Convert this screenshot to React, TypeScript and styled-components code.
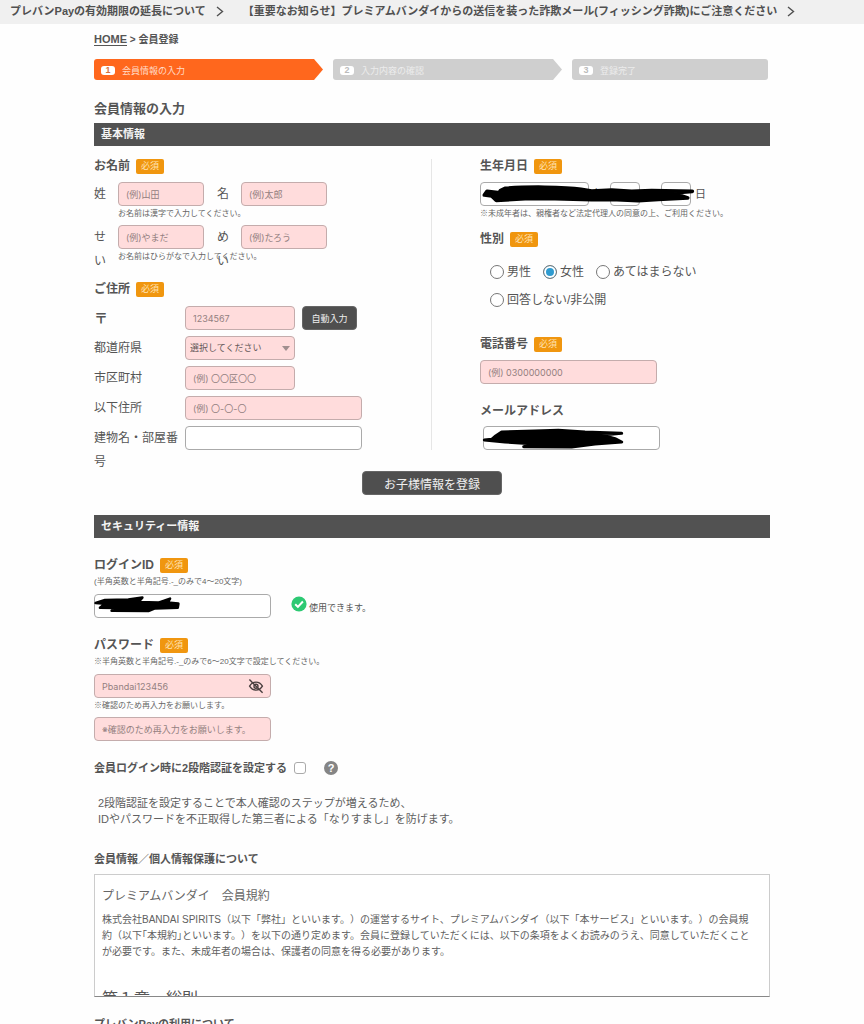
import React from "react";
import styled, { createGlobalStyle } from "styled-components";

const GlobalStyle = createGlobalStyle`
  *, *::before, *::after { box-sizing: border-box; }
  body {
    margin: 0;
    background: #fefefe;
    color: #555;
    font-family: "Liberation Sans", "Noto Sans CJK JP", sans-serif;
    font-size: 12px;
    text-spacing-trim: space-all;
  }
  p, h1, h2, h3, ol, fieldset { margin: 0; padding: 0; border: 0; }
`;

const Ticker = styled.nav`
  display: flex;
  align-items: center;
  gap: 19px;
  height: 24px;
  padding: 0 10px 2px;
  overflow: hidden;
  background: #f0f0f0;
`;

const TickerLink = styled.a`
  display: flex;
  flex: none;
  align-items: center;
  gap: 10px;
  color: #505050;
  font-size: 11px;
  font-weight: 700;
  line-height: 16px;
  text-decoration: none;
  white-space: nowrap;
`;

const Main = styled.main`
  margin: 0 94px;
`;

const Breadcrumb = styled.nav`
  margin-top: 7px;
  font-size: 10px;
  font-weight: 700;
  line-height: 16px;
  a { color: inherit; font-size: 11px; text-underline-offset: 2px; }
`;

const Steps = styled.ol`
  display: grid;
  grid-template-columns: 229fr 229fr 196fr;
  gap: 10px;
  margin: 11px 2px 0 0;
  list-style: none;
`;

const Step = styled.li<{ $active?: boolean; $last?: boolean }>`
  display: flex;
  align-items: center;
  gap: 7px;
  height: 21px;
  padding: 2px 7px 0;
  border-radius: ${(p) => (p.$last ? "3px" : "3px 0 0 3px")};
  background: ${(p) => (p.$active ? "#ff671d" : "#cfcfcf")};
  color: ${(p) => (p.$active ? "#ffdcc8" : "#ececec")};
  font-size: 9px;
  line-height: 12px;
  ${(p) =>
    p.$last
      ? ""
      : "clip-path: polygon(0 0, calc(100% - 9px) 0, 100% 50%, calc(100% - 9px) 100%, 0 100%);"}
  b {
    width: 14px;
    border-radius: 3px;
    background: #fff;
    color: ${(p) => (p.$active ? "#d8703c" : "#bbb")};
    line-height: 9px;
    text-align: center;
  }
`;

const PageTitle = styled.h1`
  margin-top: 19px;
  font-size: 13px;
  font-weight: 700;
  line-height: 20px;
`;

const SectionBar = styled.h2<{ $gap: number }>`
  margin-top: ${(p) => p.$gap}px;
  padding: 0 7px;
  background: #525252;
  color: #f4f4f4;
  font-size: 11px;
  font-weight: 700;
  line-height: 23px;
`;

const Columns = styled.div`
  display: grid;
  grid-template-columns: 1fr 1fr;
  margin-top: 13px;
`;

const LeftColumn = styled.div`
  border-right: 1px solid #e6e6e6;
`;

const RightColumn = styled.div`
  padding-left: 48px;
`;

const FieldHead = styled.h3<{ $gap?: number }>`
  display: flex;
  align-items: center;
  gap: 6px;
  margin-top: ${(p) => p.$gap ?? 0}px;
  font-size: 12px;
  font-weight: 700;
  line-height: 15px;
`;

const Required = styled.span`
  width: 28px;
  border-radius: 2px;
  background: #f0960f;
  color: #ffe2b4;
  font-size: 9px;
  font-weight: 400;
  text-align: center;
`;

const NameRow = styled.div<{ $gap: number }>`
  display: grid;
  grid-template-columns: 12px 86px 13px 86px;
  column-gap: 12px;
  height: 24px;
  margin-top: ${(p) => p.$gap}px;
`;

const Label = styled.label`
  line-height: 24px;
`;

const GivenLabel = styled(Label)`
  text-align: right;
`;

const PostalMark = styled.span`
  font-size: 14px;
  font-weight: 700;
`;

const AddressRows = styled.div`
  display: grid;
  gap: 6px;
  margin-top: 9px;
`;

const AddressRow = styled.div`
  display: grid;
  grid-template-columns: 91px auto auto;
  justify-content: start;
  height: 24px;
  button { margin-left: 7px; }
`;

const TextInput = styled.input<{ $width?: number; $plain?: boolean }>`
  width: ${(p) => p.$width ?? 86}px;
  height: 24px;
  padding: 0 7px;
  border: 1px solid ${(p) => (p.$plain ? "#aaa" : "#c4acac")};
  border-radius: 4px;
  background: ${(p) => (p.$plain ? "#fff" : "#ffdcdc")};
  color: #777;
  font-family: Inter, "Noto Sans CJK JP", sans-serif;
  font-size: 9px;
  &::placeholder { color: #938080; opacity: 1; }
`;

const Select = styled.select<{ $width: number; $plain?: boolean }>`
  appearance: none;
  width: ${(p) => p.$width}px;
  height: 24px;
  padding: 0 4px;
  border: 1px solid ${(p) => (p.$plain ? "#aaa" : "#c4acac")};
  border-radius: 4px;
  background: ${(p) => (p.$plain ? "#fff" : "#ffdcdc")};
  color: #665a5a;
  font-family: inherit;
  font-size: 9px;
`;

const Overlay = styled.div`
  position: relative;
  width: fit-content;
  height: 24px;
`;

const SelectArrow = styled.svg`
  position: absolute;
  top: 10px;
  right: 5px;
  pointer-events: none;
`;

const Scribble = styled.svg`
  position: absolute;
  top: 0;
  left: 0;
  overflow: visible;
  pointer-events: none;
`;

const DarkButton = styled.button<{ $large?: boolean }>`
  display: block;
  width: ${(p) => (p.$large ? 140 : 55)}px;
  height: 24px;
  padding: 0;
  border: 1px solid #666;
  border-radius: 4px;
  background: #4f4f4f;
  color: #f0f0f0;
  font-family: inherit;
  font-size: ${(p) => (p.$large ? 12 : 9)}px;
`;

const Center = styled.div`
  display: flex;
  justify-content: center;
  margin-top: 21px;
`;

const Note = styled.p<{ $gap?: number; $indent?: boolean }>`
  margin-top: ${(p) => p.$gap ?? 3}px;
  padding-left: ${(p) => (p.$indent ? 24 : 0)}px;
  color: #666;
  font-size: 8px;
  line-height: 10px;
`;

const BirthRow = styled.div`
  position: relative;
  display: flex;
  gap: 4px;
  margin-top: 8px;
  font-size: 11px;
  line-height: 24px;
  span { width: 13px; }
`;

const RadioGroup = styled.fieldset`
  display: flex;
  flex-wrap: wrap;
  column-gap: 12px;
  margin: 11px 0 0 10px;
  max-width: 240px;
`;

const RadioLabel = styled.label`
  display: flex;
  align-items: center;
  gap: 3px;
  line-height: 28px;
`;

const Radio = styled.input`
  appearance: none;
  width: 14px;
  height: 14px;
  margin: 0;
  border: 1px solid #777;
  border-radius: 50%;
  background: #fff;
  &:checked {
    background: #2f9bd0;
    box-shadow: inset 0 0 0 2px #fff;
  }
`;

const Stack = styled.div<{ $gap: number; $indent?: number }>`
  display: flex;
  margin-top: ${(p) => p.$gap}px;
  padding-left: ${(p) => p.$indent ?? 0}px;
`;

const Available = styled.p`
  display: flex;
  gap: 2px;
  height: 24px;
  margin-left: 20px;
  font-size: 9px;
  line-height: 28px;
  svg { margin-top: 2px; }
`;

const EyeButton = styled.button`
  position: absolute;
  top: 3px;
  right: 6px;
  width: 18px;
  height: 18px;
  padding: 1px;
  border: 0;
  background: none;
  svg { display: block; }
`;

const TwoStep = styled.div`
  display: flex;
  align-items: center;
  margin-top: 19px;
  font-size: 11px;
  font-weight: 700;
  line-height: 16px;
`;

const Checkbox = styled.input`
  appearance: none;
  width: 12px;
  height: 12px;
  margin: 0 18px 0 7px;
  border: 1px solid #aaa;
  border-radius: 3px;
  background: #fff;
`;

const HelpButton = styled.button`
  width: 14px;
  height: 14px;
  padding: 0;
  border: 0;
  border-radius: 50%;
  background: #858585;
  color: #fff;
  font: 700 11px/14px "Liberation Sans", sans-serif;
`;

const Description = styled.p`
  margin: 19px 0 0 4px;
  color: #606060;
  font-size: 11px;
  line-height: 16px;
`;

const PolicyHead = styled.h2<{ $gap: number }>`
  margin-top: ${(p) => p.$gap}px;
  font-size: 11px;
  font-weight: 700;
  line-height: 16px;
`;

const Terms = styled.section`
  height: 123px;
  margin-top: 7px;
  padding: 13px 13px 13px 7px;
  overflow-y: auto;
  scrollbar-width: none;
  border: 1px solid #ccc;
  border-bottom: 1px solid #888;
  background: #fff;
  h3 { color: #666; font-size: 12px; font-weight: 400; line-height: 16px; }
  p { margin-top: 8px; color: #606060; font-size: 10px; line-height: 16px; }
  h4 { margin: 31px 0 0; font-size: 16px; font-weight: 400; line-height: 16px; }
`;

const Chevron = () => (
  <svg width="8" height="11" viewBox="0 0 8 11" fill="none" stroke="#505050" strokeWidth="1.4" aria-hidden="true">
    <path d="M1 1l5.5 4.5L1 10" />
  </svg>
);

const news = [
  "プレバンPayの有効期限の延長について",
  "【重要なお知らせ】プレミアムバンダイからの送信を装った詐欺メール(フィッシング詐欺)にご注意ください",
];

const genders = ["男性", "女性", "あてはまらない", "回答しない/非公開"];

export default function App() {
  return (
    <>
      <GlobalStyle />
      <Ticker aria-label="お知らせ">
        {news.map((text) => (
          <TickerLink href="#" key={text}>
            {text}
            <Chevron />
          </TickerLink>
        ))}
      </Ticker>
      <Main>
        <Breadcrumb>
          <a href="#">HOME</a> &gt; 会員登録
        </Breadcrumb>
        <Steps>
          <Step $active><b>1</b>会員情報の入力</Step>
          <Step><b>2</b>入力内容の確認</Step>
          <Step $last><b>3</b>登録完了</Step>
        </Steps>
        <PageTitle>会員情報の入力</PageTitle>

        <SectionBar $gap={4}>基本情報</SectionBar>
        <Columns>
          <LeftColumn>
            <FieldHead>お名前<Required>必須</Required></FieldHead>
            <NameRow $gap={8}>
              <Label htmlFor="sei">姓</Label>
              <TextInput id="sei" placeholder="(例)山田" />
              <GivenLabel htmlFor="mei">名</GivenLabel>
              <TextInput id="mei" placeholder="(例)太郎" />
            </NameRow>
            <Note $indent>お名前は漢字で入力してください。</Note>
            <NameRow $gap={6}>
              <Label htmlFor="sei-kana">せい</Label>
              <TextInput id="sei-kana" placeholder="(例)やまだ" />
              <GivenLabel htmlFor="mei-kana">めい</GivenLabel>
              <TextInput id="mei-kana" placeholder="(例)たろう" />
            </NameRow>
            <Note $indent>お名前はひらがなで入力してください。</Note>

            <FieldHead $gap={20}>ご住所<Required>必須</Required></FieldHead>
            <AddressRows>
              <AddressRow>
                <Label htmlFor="zip"><PostalMark>〒</PostalMark></Label>
                <TextInput id="zip" $width={110} placeholder="1234567" />
                <DarkButton type="button">自動入力</DarkButton>
              </AddressRow>
              <AddressRow>
                <Label htmlFor="pref">都道府県</Label>
                <Overlay>
                  <Select id="pref" $width={110}>
                    <option>選択してください</option>
                  </Select>
                  <SelectArrow width="8" height="5" viewBox="0 0 8 5" fill="#a08f8f" aria-hidden="true">
                    <path d="M0 0h8L4 5z" />
                  </SelectArrow>
                </Overlay>
              </AddressRow>
              <AddressRow>
                <Label htmlFor="city">市区町村</Label>
                <TextInput id="city" $width={110} placeholder="(例) 〇〇区〇〇" />
              </AddressRow>
              <AddressRow>
                <Label htmlFor="street">以下住所</Label>
                <TextInput id="street" $width={177} placeholder="(例) 〇-〇-〇" />
              </AddressRow>
              <AddressRow>
                <Label htmlFor="building">建物名・部屋番号</Label>
                <TextInput id="building" $width={177} $plain />
              </AddressRow>
            </AddressRows>
          </LeftColumn>

          <RightColumn>
            <FieldHead>生年月日<Required>必須</Required></FieldHead>
            <BirthRow>
              <Select $width={109} $plain aria-label="年" />
              <span>年</span>
              <Select $width={30} $plain aria-label="月" />
              <span>月</span>
              <Select $width={30} $plain aria-label="日" />
              <span>日</span>
              <Scribble width="220" height="24" viewBox="165 96 660 72" aria-hidden="true">
                <path
                  d="M178 135L186 124L238 130L226 122L240 115C300 110 420 110 468 118L500 123L560 120L620 124L680 122L802 124L745 129L788 144L700 148L640 152L560 148L500 149L390 146L300 146L214 151L200 138Z"
                  stroke="#000" strokeWidth="11" strokeLinejoin="round"
                />
              </Scribble>
            </BirthRow>
            <Note>※未成年者は、親権者など法定代理人の同意の上、ご利用ください。</Note>

            <FieldHead $gap={13}>性別<Required>必須</Required></FieldHead>
            <RadioGroup aria-label="性別">
              {genders.map((name) => (
                <RadioLabel key={name}>
                  <Radio type="radio" name="gender" defaultChecked={name === "女性"} />
                  {name}
                </RadioLabel>
              ))}
            </RadioGroup>

            <FieldHead $gap={23}>
              <label htmlFor="tel">電話番号</label>
              <Required>必須</Required>
            </FieldHead>
            <Stack $gap={8}>
              <TextInput id="tel" $width={177} placeholder="(例) 0300000000" />
            </Stack>
            <FieldHead $gap={20}>
              <label htmlFor="mail">メールアドレス</label>
            </FieldHead>
            <Stack $gap={7} $indent={3}>
              <Overlay>
                <TextInput id="mail" type="email" $width={177} $plain />
                <Scribble width="177" height="24" viewBox="174 320 531 72" aria-hidden="true">
                  <path
                    d="M178 362L200 360L212 350L230 338L330 335L400 333L480 338L590 342L530 347L570 358L590 368L510 374L440 383L296 382L330 374L240 368L178 362Z"
                    stroke="#000" strokeWidth="9" strokeLinejoin="round"
                  />
                </Scribble>
              </Overlay>
            </Stack>
          </RightColumn>
        </Columns>
        <Center>
          <DarkButton type="button" $large>お子様情報を登録</DarkButton>
        </Center>

        <SectionBar $gap={20}>セキュリティー情報</SectionBar>
        <FieldHead $gap={20}>
          <label htmlFor="login">ログインID</label>
          <Required>必須</Required>
        </FieldHead>
        <Note $gap={4}>(半角英数と半角記号.-_のみで4～20文字)</Note>
        <Stack $gap={7}>
          <Overlay>
            <TextInput id="login" $width={177} $plain />
            <Scribble width="177" height="24" viewBox="27 267 531 72" aria-hidden="true">
              <path
                d="M32 294L60 285L130 284L172 278L160 291L220 293L255 281L248 293L280 296L278 308L210 310L190 318L80 317L95 309L45 308L60 296Z"
                stroke="#000" strokeWidth="8" strokeLinejoin="round"
              />
            </Scribble>
          </Overlay>
          <Available>
            <svg width="16" height="16" viewBox="0 0 16 16" aria-hidden="true">
              <circle cx="8" cy="8" r="7.6" fill="#2dc973" />
              <path d="M4.2 8.3l2.7 2.6 5-5.4" fill="none" stroke="#fff" strokeWidth="2" />
            </svg>
            使用できます。
          </Available>
        </Stack>

        <FieldHead $gap={20}>
          <label htmlFor="password">パスワード</label>
          <Required>必須</Required>
        </FieldHead>
        <Note $gap={4}>※半角英数と半角記号.-_のみで6～20文字で設定してください。</Note>
        <Stack $gap={7}>
          <Overlay>
            <TextInput id="password" $width={177} placeholder="Pbandai123456" />
            <EyeButton type="button" aria-label="パスワードを表示">
              <svg width="16" height="16" viewBox="0 0 16 16" fill="none" stroke="#4a3f3f" strokeWidth="1.4">
                <path d="M1.6 8.2C4.6 2.8 11.4 2.8 14.4 8.2C11.4 13.4 4.6 13.4 1.6 8.2Z" />
                <circle cx="8" cy="8.2" r="2" />
                <path d="M1.4 1.6L14.6 14.8" />
              </svg>
            </EyeButton>
          </Overlay>
        </Stack>
        <Note>※確認のため再入力をお願いします。</Note>
        <Stack $gap={6}>
          <TextInput $width={177} aria-label="パスワード(確認)" placeholder="※確認のため再入力をお願いします。" />
        </Stack>

        <TwoStep>
          <label htmlFor="two-step">会員ログイン時に2段階認証を設定する</label>
          <Checkbox id="two-step" type="checkbox" />
          <HelpButton type="button">?</HelpButton>
        </TwoStep>
        <Description>
          2段階認証を設定することで本人確認のステップが増えるため、
          <br />
          IDやパスワードを不正取得した第三者による「なりすまし」を防げます。
        </Description>

        <PolicyHead $gap={24}>会員情報／個人情報保護について</PolicyHead>
        <Terms tabIndex={0}>
          <h3>プレミアムバンダイ　会員規約</h3>
          <p>
            株式会社BANDAI SPIRITS（以下「弊社」といいます。）の運営するサイト、プレミアムバンダイ（以下「本サービス」といいます。）の会員規約（以下｢本規約｣といいます。）を以下の通り定めます。会員に登録していただくには、以下の条項をよくお読みのうえ、同意していただくことが必要です。また、未成年者の場合は、保護者の同意を得る必要があります。
          </p>
          <h4>第１章　総則</h4>
        </Terms>
        <PolicyHead $gap={19}>プレバンPayの利用について</PolicyHead>
      </Main>
    </>
  );
}
